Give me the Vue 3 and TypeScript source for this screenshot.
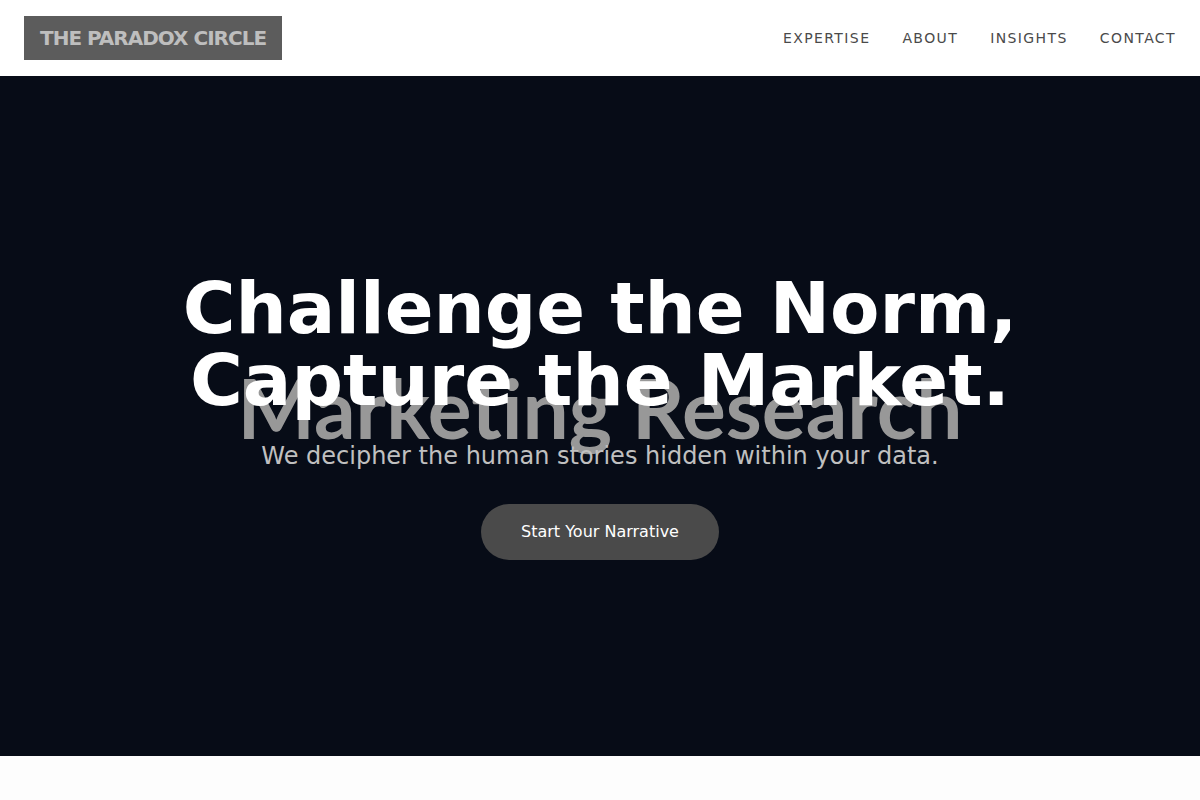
<script setup lang="ts">
interface NavLink {
  label: string
  href: string
}

const links: NavLink[] = [
  { label: 'Expertise', href: '#expertise' },
  { label: 'About', href: '#about' },
  { label: 'Insights', href: '#insights' },
  { label: 'Contact', href: '#contact' },
]
</script>

<template>
  <div class="page">
    <header class="header">
      <a class="logo" href="#top">THE PARADOX CIRCLE</a>
      <nav class="nav" aria-label="Main">
        <a v-for="link in links" :key="link.href" :href="link.href">{{ link.label }}</a>
      </nav>
    </header>
    <main>
      <section id="top" class="hero">
        <div class="backdrop" aria-hidden="true">Marketing Research</div>
        <div class="content">
          <h1>Challenge the Norm,<br />Capture the Market.</h1>
          <p>We decipher the human stories hidden within your data.</p>
          <button type="button" class="cta">Start Your Narrative</button>
        </div>
      </section>
    </main>
  </div>
</template>

<style>
body {
  margin: 0;
  background: #fdfdfd;
}
</style>

<style scoped>
.page {
  height: 100vh;
  overflow: hidden;
  font-family: "DejaVu Sans", sans-serif;
}

.header {
  display: flex;
  align-items: center;
  justify-content: space-between;
  padding: 16px 24px;
  background: #fff;
}

.logo {
  padding: 8px 16px;
  background: #5c5c5c;
  color: #bebebe;
  font-size: 20px;
  font-weight: 700;
  line-height: 28px;
  letter-spacing: -1px;
  text-decoration: none;
}

.nav {
  display: flex;
  gap: 32px;
}

.nav a {
  color: #4a4a4a;
  font-size: 14px;
  line-height: 20px;
  letter-spacing: 0.1em;
  text-transform: uppercase;
  text-decoration: none;
}

.hero {
  position: relative;
  display: flex;
  align-items: center;
  justify-content: center;
  height: 85vh;
  background: #070c17;
}

.backdrop {
  position: absolute;
  inset: 0;
  display: flex;
  align-items: center;
  justify-content: center;
  padding-bottom: 18px;
  color: #989898;
  font-family: Lato, sans-serif;
  font-size: 82px;
  font-weight: 700;
  font-variant-ligatures: none;
  line-height: 1;
  white-space: nowrap;
}

.content {
  position: relative;
  text-align: center;
}

h1 {
  margin: 0 0 24px;
  color: #fff;
  font-size: 72px;
  font-weight: 700;
  line-height: 72px;
}

p {
  margin: 0 0 32px;
  color: #c0c0c0;
  font-size: 24px;
  line-height: 32px;
}

.cta {
  padding: 16px 40px;
  border: 0;
  border-radius: 28px;
  background: #4a4a4a;
  color: #fff;
  font-family: inherit;
  font-size: 16px;
  line-height: 24px;
  cursor: pointer;
}
</style>
